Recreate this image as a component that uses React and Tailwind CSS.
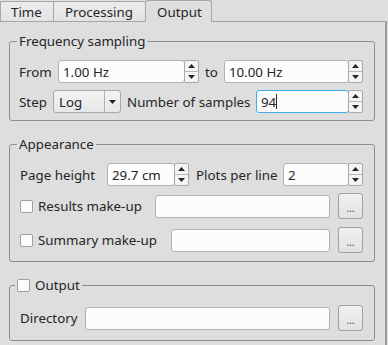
import React from "react";

const Arrow = ({ up }) => (
  <svg width="7" height="4" viewBox="0 0 7 4" className="block">
    {up ? <path d="M0 4 L3.5 0 L7 4 Z" fill="#232627" /> : <path d="M0 0 L3.5 4 L7 0 Z" fill="#232627" />}
  </svg>
);

const SpinBox = ({ value, className = "", focused = false, caret = false }) => (
  <div className={`flex h-[23px] ${className}`}>
    <div
      className={`flex-1 flex items-center pl-[4px] bg-[#fcfcfc] rounded-[3px] border ${
        focused ? "border-[#3daee9]" : "border-[#b2b2b2]"
      }`}
    >
      <span>{value}</span>
      {caret && <span className="w-[1px] h-[15px] bg-[#232627]"></span>}
    </div>
    <div className="w-[15px] flex flex-col border border-[#a8a8a8] rounded-[2px] bg-[#f4f4f4] -ml-[1px]">
      <div className="flex-1 flex items-center justify-center border-b border-[#b8b8b8]">
        <Arrow up />
      </div>
      <div className="flex-1 flex items-center justify-center">
        <Arrow />
      </div>
    </div>
  </div>
);

const LineEdit = ({ className = "" }) => (
  <div className={`h-[23px] bg-[#fcfcfc] rounded-[3px] border border-[#b2b2b2] ${className}`}></div>
);

const DotsButton = () => (
  <button className="ml-[8px] w-[25px] h-[26px] shrink-0 rounded-[3px] border border-[#a0a0a0] bg-gradient-to-b from-[#f0f0f0] to-[#e2e2e2] flex items-center justify-center text-[10px] leading-none text-[#444] pt-[4px]">
    ...
  </button>
);

const CheckBox = () => (
  <span className="inline-block w-[13px] h-[13px] bg-[#fcfcfc] border border-[#a0a0a0] rounded-[2px] shrink-0"></span>
);

const Group = ({ title, className = "", children }) => (
  <fieldset className={`border border-[#8e8e8e] rounded-[3px] pl-[9px] pr-[11px] ${className}`}>
    <legend className="-ml-[2px] px-[2px] leading-[18px]">{title}</legend>
    {children}
  </fieldset>
);

export default function App() {
  return (
    <div className="w-[388px] h-[345px] overflow-hidden bg-[#dedede] font-['Noto_Sans',sans-serif] text-[13.33px] leading-[18px] text-[#232627]">
      <div className="flex items-end h-[22px]">
        <div className="h-[21px] w-[53px] pl-[10px] border-t border-l border-b border-[#a6a6a6] bg-gradient-to-b from-[#ececec] to-[#e3e3e3] flex items-center rounded-tl-[2px]">
          Time
        </div>
        <div className="h-[21px] w-[92px] pl-[11px] border-t border-l border-b border-[#a6a6a6] bg-gradient-to-b from-[#ececec] to-[#e3e3e3] flex items-center">
          Processing
        </div>
        <div className="h-[22px] w-[67px] pl-[11px] border-t border-l border-r border-[#a6a6a6] rounded-t-[3px] flex items-center">
          Output
        </div>
        <div className="flex-1 h-[1px] border-b border-[#a0a0a0] mr-[1px]"></div>
      </div>
      <div className="w-[387px] h-[323px] border-r-2 border-[#9c9c9c] pl-[9px] pr-[10px] flex flex-col">
        <Group title="Frequency sampling" className="mt-[10px] pt-[10px] pb-[7px]">
          <div className="flex items-center h-[23px]">
            <span className="w-[39px]">From</span>
            <SpinBox value="1.00 Hz" className="w-[141px]" />
            <span className="px-[6px]">to</span>
            <SpinBox value="10.00 Hz" className="flex-1" />
          </div>
          <div className="flex items-center h-[23px] mt-[7px]">
            <span className="w-[34px]">Step</span>
            <div className="w-[68px] h-[23px] flex border border-[#a8a8a8] rounded-[3px] bg-gradient-to-b from-[#f2f2f2] to-[#e8e8e8]">
              <span className="flex-1 pl-[5px] flex items-center">Log</span>
              <span className="w-[16px] border-l border-[#b0b0b0] flex items-center justify-center">
                <Arrow />
              </span>
            </div>
            <span className="ml-[6px] whitespace-nowrap">Number of samples</span>
            <SpinBox value="94" focused caret className="w-[107px] ml-auto" />
          </div>
        </Group>

        <Group title="Appearance" className="mt-[14px] pt-[10px] pb-[8px]">
          <div className="flex items-center h-[23px]">
            <span className="w-[88px] pl-[1px]">Page height</span>
            <SpinBox value="29.7 cm" className="w-[82px]" />
            <span className="ml-[7px] whitespace-nowrap">Plots per line</span>
            <SpinBox value="2" className="w-[80px] ml-auto" />
          </div>
          <div className="flex items-center h-[26px] mt-[7px]">
            <div className="w-[136px] flex items-center pl-[1px] whitespace-nowrap">
              <CheckBox />
              <span className="ml-[5px]">Results make-up</span>
            </div>
            <LineEdit className="flex-1" />
            <DotsButton />
          </div>
          <div className="flex items-center h-[26px] mt-[8px]">
            <div className="w-[152px] flex items-center pl-[1px] whitespace-nowrap">
              <CheckBox />
              <span className="ml-[5px]">Summary make-up</span>
            </div>
            <LineEdit className="flex-1" />
            <DotsButton />
          </div>
        </Group>

        <fieldset className="mt-[14px] pt-[11px] pb-[9px] border border-[#8e8e8e] rounded-[3px] pl-[9px] pr-[11px]">
          <legend className="-ml-[4px] px-[2px] leading-[18px]">
            <span className="flex items-center">
              <CheckBox />
              <span className="ml-[5px]">Output</span>
            </span>
          </legend>
          <div className="flex items-center h-[26px]">
            <span className="w-[66px] pl-[1px]">Directory</span>
            <LineEdit className="flex-1" />
            <DotsButton />
          </div>
        </fieldset>
      </div>
    </div>
  );
}
